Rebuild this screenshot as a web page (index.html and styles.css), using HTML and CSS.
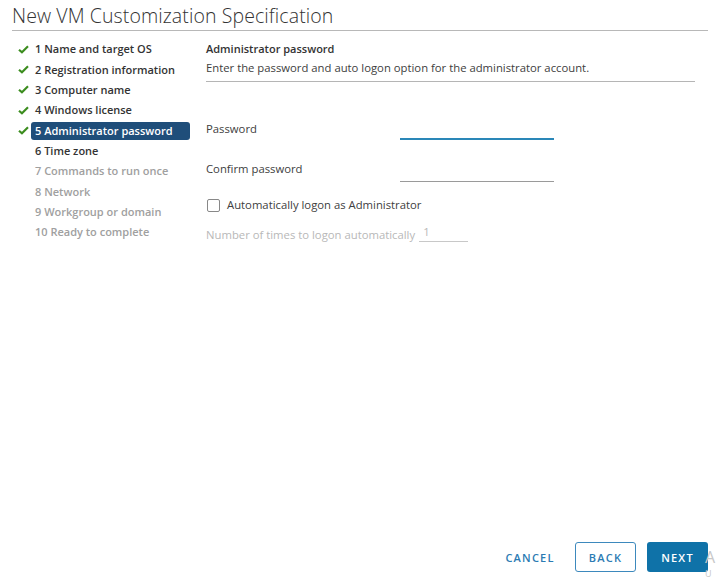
FILE: index.html
```html
<!DOCTYPE html>
<html>
<head>
<meta charset="utf-8">
<link rel="stylesheet" href="styles.css">
</head>
<body>
<div class="dialog">
  <div class="title">New VM Customization Specification</div>
  <div class="main">
    <ul class="steps">
      <li class="done"><span class="chk"><svg viewBox="0 0 12 10" width="11" height="9"><path d="M1 5.2 L4.3 8.2 L11 1.5" fill="none" stroke="#3c8d1f" stroke-width="2.4"/></svg></span><span class="lbl">1 Name and target OS</span></li>
      <li class="done"><span class="chk"><svg viewBox="0 0 12 10" width="11" height="9"><path d="M1 5.2 L4.3 8.2 L11 1.5" fill="none" stroke="#3c8d1f" stroke-width="2.4"/></svg></span><span class="lbl">2 Registration information</span></li>
      <li class="done"><span class="chk"><svg viewBox="0 0 12 10" width="11" height="9"><path d="M1 5.2 L4.3 8.2 L11 1.5" fill="none" stroke="#3c8d1f" stroke-width="2.4"/></svg></span><span class="lbl">3 Computer name</span></li>
      <li class="done"><span class="chk"><svg viewBox="0 0 12 10" width="11" height="9"><path d="M1 5.2 L4.3 8.2 L11 1.5" fill="none" stroke="#3c8d1f" stroke-width="2.4"/></svg></span><span class="lbl">4 Windows license</span></li>
      <li class="done active"><span class="chk"><svg viewBox="0 0 12 10" width="11" height="9"><path d="M1 5.2 L4.3 8.2 L11 1.5" fill="none" stroke="#3c8d1f" stroke-width="2.4"/></svg></span><span class="lbl">5 Administrator password</span></li>
      <li class="next"><span class="chk"></span><span class="lbl">6 Time zone</span></li>
      <li class="todo"><span class="chk"></span><span class="lbl">7 Commands to run once</span></li>
      <li class="todo"><span class="chk"></span><span class="lbl">8 Network</span></li>
      <li class="todo"><span class="chk"></span><span class="lbl">9 Workgroup or domain</span></li>
      <li class="todo"><span class="chk"></span><span class="lbl">10 Ready to complete</span></li>
    </ul>
    <div class="content">
      <div class="head">
        <div class="h">Administrator password</div>
        <div class="desc">Enter the password and auto logon option for the administrator account.</div>
      </div>
      <div class="row r1"><span class="flabel">Password</span><span class="field focus"></span></div>
      <div class="row r2"><span class="flabel">Confirm password</span><span class="field"></span></div>
      <div class="cbrow"><span class="cb"></span><span>Automatically logon as Administrator</span></div>
      <div class="numrow"><span>Number of times to logon automatically</span><span class="num">1</span></div>
    </div>
  </div>
  <div class="footer">
    <span class="btn link">CANCEL</span>
    <span class="btn outline">BACK</span>
    <span class="btn primary">NEXT</span>
  </div>
</div>
<div class="behind"><span class="a">A</span><span class="u">U</span></div>
</body>
</html>
```
FILE: styles.css
```css
html, body { margin: 0; padding: 0; background: #fff; }
body { width: 717px; height: 580px; overflow: hidden; position: relative; font-family: "Open Sans", "Lato", sans-serif; color: #313131; }
.dialog { display: flex; flex-direction: column; height: 580px; }
.title { font-family: "Open Sans", sans-serif; font-weight: 300; font-size: 19.5px; color: #333; margin: 0 9px 0 12px; padding: 4px 0 3px; border-bottom: 1px solid #b8b8b8; line-height: 23px; letter-spacing: 0.1px; }
.main { display: flex; flex: 1; padding-top: 8px; }
.steps { list-style: none; margin: 0; padding: 0 0 0 18px; width: 172px; }
.steps li { display: flex; align-items: center; height: 20.35px; font-size: 11px; font-weight: 600; }
.chk { width: 13px; display: flex; align-items: center; }
.lbl { padding: 0 4px 0 4px; line-height: 18px; border-radius: 3px; flex: 1; white-space: nowrap; }
.steps li.done .lbl, .steps li.next .lbl { color: #333; }
.steps li.todo .lbl { color: #a0a0a0; }
.steps li.active .lbl { background: #1f4e7a; color: #fff; }
.content { margin-left: 16px; width: 489px; font-size: 11.3px; padding-top: 2px; }
.head { border-bottom: 1px solid #b5b5b5; padding-bottom: 5px; }
.h { font-weight: 600; font-size: 11px; color: #333; line-height: 16px; }
.desc { line-height: 16px; margin-top: 3px; color: #404040; }
.row { display: flex; align-items: flex-end; }
.flabel { width: 194px; line-height: 14px; color: #404040; }
.field { width: 154px; border-bottom: 1px solid #9a9a9a; }
.field.focus { border-bottom: 2px solid #2a87b8; height: 13px; }
.r1 { margin-top: 40px; }
.r1 .flabel { margin-bottom: 4px; }
.r2 { margin-top: 22px; }
.r2 .field { height: 17px; }
.r2 .flabel { margin-bottom: 6px; }
.cbrow { display: flex; align-items: center; margin-top: 16px; color: #404040; line-height: 14px; }
.cb { width: 11px; height: 11px; border: 1px solid #888; border-radius: 2px; margin: 0 7px 0 1px; }
.numrow { display: flex; align-items: flex-end; margin-top: 13px; color: #b8b8b8; }
.num { margin-left: 4px; width: 45px; padding-left: 4px; border-bottom: 1px solid #c8c8c8; line-height: 14px; padding-bottom: 2px; }
.footer { display: flex; justify-content: flex-end; align-items: center; gap: 11px; padding: 0 9px 8px 0; }
.btn { height: 28px; box-sizing: border-box; display: flex; align-items: center; justify-content: center; font-size: 11px; font-weight: 600; letter-spacing: 1.2px; border-radius: 3px; }
.btn.link { color: #2b7bb3; width: 68px; }
.btn.outline { border: 1px solid #3d89bd; color: #2b7bb3; width: 61px; height: 30px; }
.btn.primary { background: #0f72a8; color: #fff; width: 61px; height: 30px; }
.behind { position: absolute; left: 705px; top: 549px; font-family: "Open Sans", sans-serif; color: #c8c8c8; display: flex; flex-direction: column; line-height: 1; }
.behind .a { font-size: 16px; line-height: 16px; }
.behind .u { font-size: 9px; line-height: 9px; margin-top: 4px; }
```
